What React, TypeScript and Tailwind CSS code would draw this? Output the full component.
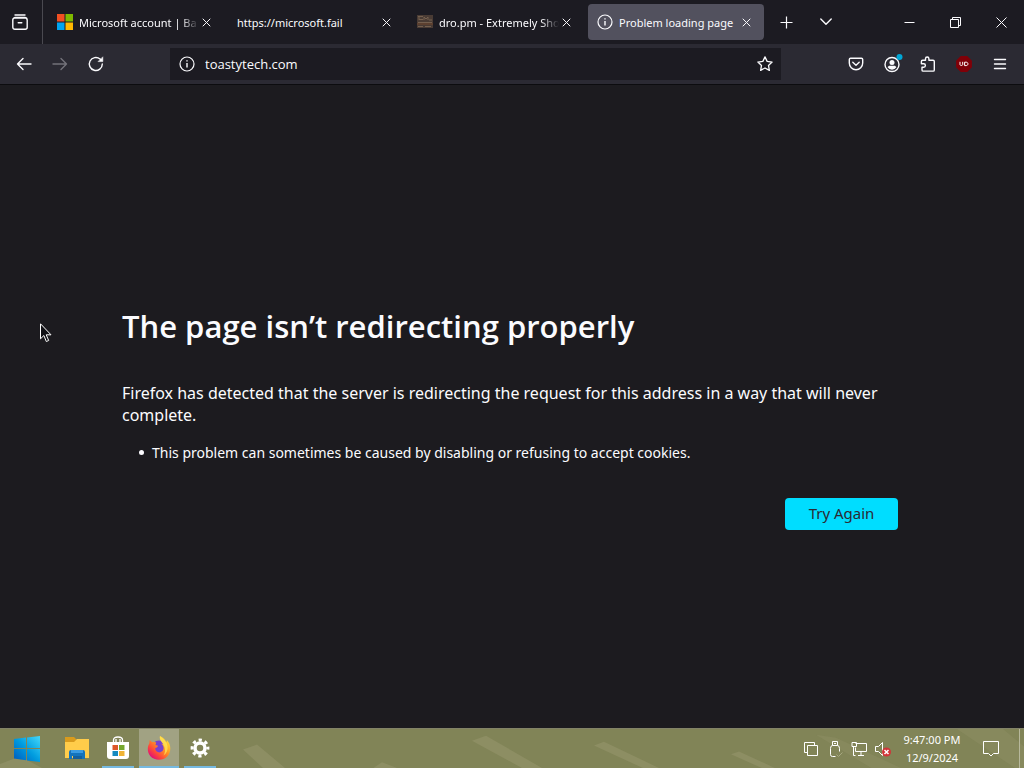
import type { ReactNode } from "react";

function Close({ className = "" }: { className?: string }) {
  return (
    <svg viewBox="0 0 10 10" className={className} fill="none" stroke="currentColor" aria-hidden="true">
      <path d="M.8.8l8.4 8.4M9.2.8L.8 9.2" strokeWidth="1.1" />
    </svg>
  );
}

function Info() {
  return (
    <svg viewBox="0 0 16 16" className="h-4 w-4 shrink-0" fill="none" stroke="currentColor" strokeWidth="1.2" aria-hidden="true">
      <circle cx="8" cy="8" r="7" />
      <path d="M8 7v4.5M8 4.2v1.3" strokeWidth="1.4" />
    </svg>
  );
}

function MicrosoftLogo() {
  return (
    <svg viewBox="0 0 16 16" className="h-4 w-4 shrink-0" aria-hidden="true">
      <path fill="#f25022" d="M0 0h7.5v7.5H0z" />
      <path fill="#7fba00" d="M8.5 0H16v7.5H8.5z" />
      <path fill="#00a4ef" d="M0 8.5h7.5V16H0z" />
      <path fill="#ffb900" d="M8.5 8.5H16V16H8.5z" />
    </svg>
  );
}

function DroIcon() {
  return (
    <svg viewBox="0 0 16 16" className="h-4 w-4 shrink-0" aria-hidden="true">
      <path fill="#493b34" d="M0 1h16v13H0z" />
      <path fill="none" stroke="#75604f" d="M1 2.5h5M2 2v4M2 5.5h4M7 6V3l2 2 2-2v3M12 6h3M1 8.5h14M1 12.500h5M8 12.500h6" />
      <path fill="#5c4030" d="M0 9h16v2H0z" />
    </svg>
  );
}

function Tab({ title, icon, active = false, fade = false }: { title: string; icon?: ReactNode; active?: boolean; fade?: boolean }) {
  return (
    <div className={`flex h-9 w-44 shrink-0 items-center rounded pr-[13px] pl-[9px] ${active ? "bg-[#52515e]" : ""}`}>
      {icon}
      <button
        type="button"
        className={`min-w-0 flex-1 overflow-hidden pt-px text-left text-[11px] leading-4 whitespace-nowrap ${icon ? "ml-[6px]" : ""} ${
          fade ? "[mask-image:linear-gradient(to_right,black_85%,transparent)]" : ""
        }`}
      >
        {title}
      </button>
      <button type="button" aria-label="Close tab" className="ml-[3px] shrink-0">
        <Close className="h-[9px] w-[9px]" />
      </button>
    </div>
  );
}

function ToolButton({ label, children, dim = false }: { label: string; children: ReactNode; dim?: boolean }) {
  return (
    <button type="button" aria-label={label} className={`flex h-8 w-9 shrink-0 items-center justify-center ${dim ? "text-[#73727a]" : ""}`}>
      <svg
        viewBox="0 0 16 16"
        className="h-4 w-4 overflow-visible"
        fill="none"
        stroke="currentColor"
        strokeWidth="1.4"
        strokeLinecap="round"
        strokeLinejoin="round"
        aria-hidden="true"
      >
        {children}
      </svg>
    </button>
  );
}

function WindowButton({ label, children }: { label: string; children: ReactNode }) {
  return (
    <button type="button" aria-label={label} className="flex h-full w-[46px] items-center justify-center">
      <svg viewBox="0 0 11 11" className="h-[11px] w-[11px]" fill="none" stroke="currentColor" aria-hidden="true">
        {children}
      </svg>
    </button>
  );
}

function TabStrip() {
  return (
    <header className="flex h-11 items-center bg-[#1c1b22]">
      <button type="button" aria-label="Recent browsing" className="flex h-full w-[42px] shrink-0 items-center justify-center pr-[2px]">
        <svg viewBox="0 0 16 16" className="h-4 w-4" fill="none" stroke="currentColor" strokeWidth="1.4" strokeLinecap="round" aria-hidden="true">
          <path d="M3 1h10M2.500 4h11a1.700 1.700 0 0 1 1.700 1.700v7.600a2 2 0 0 1-2 2H2.800a2 2 0 0 1-2-2V5.700A1.700 1.700 0 0 1 2.500 4zM1.200 5C1.400 3.800 2 3.600 3 3.500h10c1 .1 1.600.5 1.800 1.500M6.200 8.800h3.600" />
        </svg>
      </button>
      <div className="h-full border-l border-[#4a4950]" />
      <nav aria-label="Tabs" className="ml-[5px] flex gap-1">
        <Tab title="Microsoft account | Ba" icon={<MicrosoftLogo />} fade />
        <Tab title="https://microsoft.fail" />
        <Tab title="dro.pm - Extremely Sho" icon={<DroIcon />} fade />
        <Tab title="Problem loading page" icon={<Info />} active />
      </nav>
      <button type="button" aria-label="New tab" className="ml-1 flex h-9 w-9 items-center justify-center">
        <svg viewBox="0 0 13 13" className="h-[13px] w-[13px]" fill="none" stroke="currentColor" strokeWidth="1.2" aria-hidden="true">
          <path d="M6.500 .5v12M.5 6.500h12" />
        </svg>
      </button>
      <button type="button" aria-label="List all tabs" className="ml-1 flex h-9 w-9 items-center justify-center">
        <svg viewBox="0 0 12 12" className="h-3 w-3" fill="none" stroke="currentColor" strokeWidth="1.4" strokeLinecap="round" strokeLinejoin="round" aria-hidden="true">
          <path d="M.8 3L6 8.200 11.200 3" />
        </svg>
      </button>
      <div className="ml-auto flex h-full">
        <WindowButton label="Minimize">
          <path d="M.5 5.500h10" />
        </WindowButton>
        <WindowButton label="Restore">
          <path d="M.5 2.500h8v8h-8zM2.500 2.500v-2h8v8h-2" />
        </WindowButton>
        <WindowButton label="Close">
          <path d="M.5.5l10 10M10.500.5l-10 10" />
        </WindowButton>
      </div>
    </header>
  );
}

function Toolbar() {
  return (
    <div className="flex h-[41px] items-center border-b border-[#0c0c0f] bg-[#2b2a33] px-[6px]">
      <ToolButton label="Back">
        <path d="M15 8H1.500M7 2.500L1.500 8 7 13.500" />
      </ToolButton>
      <ToolButton label="Forward" dim>
        <path d="M1 8h13.500M9 2.500L14.500 8 9 13.500" />
      </ToolButton>
      <ToolButton label="Reload">
        <path d="M14.300 8a6.500 6.500 0 1 1-2.200-4.900l1 1" />
        <path d="M14.800 1.200v4.400h-4.400z" fill="currentColor" strokeWidth=".6" />
      </ToolButton>
      <div className="mr-[57px] ml-14 flex h-8 min-w-0 flex-1 items-center bg-[#1c1b22] pl-[9px]">
        <Info />
        <input
          aria-label="Address"
          defaultValue="toastytech.com"
          className="ml-[10px] min-w-0 flex-1 bg-transparent pt-[2px] font-['Open_Sans','Noto_Sans',sans-serif] text-[13px] text-[#fbfbfe] outline-none"
        />
        <button type="button" aria-label="Bookmark this page" className="flex h-8 w-8 items-center justify-center">
          <svg viewBox="0 0 16 16" className="h-4 w-4" fill="none" stroke="currentColor" strokeWidth="1.300" strokeLinejoin="round" aria-hidden="true">
            <path d="M8 .9l2.150 4.500 4.950.65-3.620 3.420.9 4.900L8 12l-4.380 2.370.9-4.900L.9 6.050l4.950-.65z" />
          </svg>
        </button>
      </div>
      <ToolButton label="Save to Pocket">
        <path d="M2.600 2.200h10.800c.7 0 1.300.5 1.300 1.300v3.600a6.700 6.700 0 0 1-13.400 0V3.500c0-.8.600-1.300 1.300-1.300zM4.800 6.300L8 9.300l3.200-3" />
      </ToolButton>
      <ToolButton label="Account">
        <circle cx="8" cy="8.500" r="7" />
        <circle cx="8" cy="6.600" r="2.500" fill="currentColor" stroke="none" />
        <path d="M3.600 11.300c.5-1 1.300-1.500 2.400-1.500h4c1.100 0 1.900.5 2.400 1.500A5.200 5.200 0 0 1 8 13.700a5.200 5.200 0 0 1-4.400-2.400z" fill="currentColor" stroke="none" />
        <circle cx="15.500" cy="1" r="3" fill="#00a7d6" stroke="none" />
      </ToolButton>
      <ToolButton label="Extensions">
        <path d="M5.500 4.200V2.700a1.700 1.700 0 0 1 3.400 0v1.500h4.200c.7 0 1.200.5 1.200 1.200v8.500c0 .7-.5 1.200-1.200 1.200H3.200c-.7 0-1.200-.5-1.200-1.200v-2.700h1.700a1.700 1.700 0 0 0 0-3.400H1.400V5.400c0-.7.5-1.200 1.200-1.200z" />
      </ToolButton>
      <ToolButton label="uBlock Origin">
        <path d="M5 .8h6L15.200 5v6L11 15.200H5L.8 11V5z" fill="#800008" stroke="#800008" />
        <path d="M4 6.200v2.500c0 1 2.700 1 2.700 0V6.200M9 6.200h1.200c2.300 0 2.300 3.400 0 3.400H9z" stroke="#fff" strokeWidth="1" />
      </ToolButton>
      <ToolButton label="Application menu">
        <path d="M2.500 3.500h11M2.500 8h11M2.500 12.500h11" strokeWidth="1.400" />
      </ToolButton>
    </div>
  );
}

function TaskButton({ label, children, active = false, running = false }: { label: string; children: ReactNode; active?: boolean; running?: boolean }) {
  return (
    <button type="button" aria-label={label} className={`flex h-full w-10 flex-col items-center ${active ? "bg-[#a1a283]" : ""}`}>
      <span className="flex flex-1 items-center pt-px">{children}</span>
      <span className={`h-[2px] ${active ? "w-full" : "w-8"} ${running ? "bg-[#76b9e0]" : ""}`} />
    </button>
  );
}

function TrayIcon({ label, children }: { label: string; children: ReactNode }) {
  return (
    <button type="button" aria-label={label} className="flex h-full w-6 items-center justify-center">
      <svg viewBox="0 0 16 16" className="h-4 w-4 overflow-visible" fill="none" stroke="currentColor" aria-hidden="true">
        {children}
      </svg>
    </button>
  );
}

function Taskbar() {
  return (
    <footer className="relative isolate flex h-10 items-center overflow-hidden border-t border-[#828368] bg-[#818457] text-white">
      <svg viewBox="0 0 1024 40" preserveAspectRatio="none" className="absolute inset-0 -z-10 h-full w-full" aria-hidden="true">
        <g fill="#8d8e63">
          <path d="M0 36l20-8 22 12H0zM243 21l14-5 28 24h-22zM372 41l10-7 20 8zM472 12l14-5 56 33h-20zM594 17l10-4 57 28h-16zM731 26l8-3 38 18h-13z" />
          <path d="M816 6l20 3 67 32h-30zM957 0h46l21 18v22h-9z" opacity=".5" />
        </g>
      </svg>
      <button type="button" aria-label="Start" className="flex h-full w-[54px] items-center justify-center">
        <svg viewBox="0 0 28 26" className="h-[26px] w-7" aria-hidden="true">
          <defs>
            <linearGradient id="start" x1="0" y1="1" x2="1" y2="0">
              <stop stopColor="#0057bc" />
              <stop offset=".5" stopColor="#009cdf" />
              <stop offset="1" stopColor="#45d8fa" />
            </linearGradient>
          </defs>
          <path fill="url(#start)" d="M1 3l12-1.500V12H1zM14 1.400L27 0v12H14zM1 13h12v11.200L1 22.500zM14 13h13v13l-13-1.600z" />
        </svg>
      </button>
      <div className="ml-[3px] flex h-full gap-px">
        <TaskButton label="File Explorer">
          <svg viewBox="0 0 26 24" className="h-6 w-[26px]" aria-hidden="true">
            <path fill="#d99b1d" d="M1 1h9l3 3h12v5H1z" />
            <path fill="#ffcc4a" d="M1 6h9l3-3h12v19H1z" />
            <path fill="#1473bc" d="M5 23v-7q0-2 2-2h12q2 0 2 2v7h-3v-3H8v3z" />
            <path fill="#3b9be2" d="M7 14h12v3H7z" />
            <path fill="#145f9e" d="M9 20h9v3H9z" />
          </svg>
        </TaskButton>
        <TaskButton label="Microsoft Store" running>
          <svg viewBox="0 0 24 24" className="h-6 w-6" aria-hidden="true">
            <path d="M7.500 7V4q0-3 4.500-3t4.500 3v3M10 6V3M14 3v3" fill="none" stroke="#fff" strokeWidth="1.300" />
            <path fill="#fff" d="M1 6h22v14q0 3-3 3H4q-3 0-3-3z" />
            <path fill="#dd5728" d="M6.500 9H12v5H6.500z" />
            <path fill="#75a72e" d="M13 9h5.500v5H13z" />
            <path fill="#178abf" d="M6.500 15H12v5H6.500z" />
            <path fill="#efb335" d="M13 15h5.500v5H13z" />
          </svg>
        </TaskButton>
        <TaskButton label="Firefox" active running>
          <svg viewBox="0 0 24 24" className="h-6 w-6" aria-hidden="true">
            <defs>
              <linearGradient id="fox" x1=".9" y1=".1" x2=".2" y2=".9">
                <stop stopColor="#ffe33d" />
                <stop offset=".4" stopColor="#ff9e22" />
                <stop offset=".75" stopColor="#ff4b37" />
                <stop offset="1" stopColor="#e31572" />
              </linearGradient>
            </defs>
            <circle cx="12" cy="12" r="7.500" fill="#7941cd" />
            <path fill="url(#fox)" d="M13 0c4 2 5.500 4 6 6 1-.3 1-1.200.8-2 5 5 4.200 12.500.4 16.500C16 25 7.500 25 3.200 20 0 16 .3 10.500 2.300 7.500L2.700 4l2.500 2.300c1.300-.5 2.700-.5 4 .2L8.500 9l2.500.8c-.2 1.200-1.200 1.700-2.800 2.500 0 4 4.500 5.200 7 3 2.500-2.500 1.300-6.300-1-7.500 1 0 1.700.3 2.400.8C15.500 5.500 12 4 13 0z" />
            <path fill="#ffe55a" opacity=".75" d="M13 0c4 3 7 6 7.500 10 .6 4-.8 7.500-4 9.500 3-5 1-8.500-.2-11C15 6 12 4 13 0z" />
          </svg>
        </TaskButton>
        <TaskButton label="Settings" running>
          <svg viewBox="0 0 20 20" className="h-5 w-5" aria-hidden="true">
            <g fill="none" stroke="#fff">
              <circle cx="10" cy="10" r="5" strokeWidth="3.500" />
              <circle cx="10" cy="10" r="7.900" strokeWidth="3" strokeDasharray="3.200 3.004" strokeDashoffset="1.600" />
            </g>
          </svg>
        </TaskButton>
      </div>
      <div className="ml-auto flex h-full items-center">
        <TrayIcon label="Virtual machine">
          <path d="M4.500 4.500h10v10h-10zM4.500 11.500h-3v-10h10v3" />
        </TrayIcon>
        <TrayIcon label="Safely remove hardware">
          <path d="M5.500 4.500v-4h5v4M7 2.500h2M3.500 13.500v-6q0-3 2-3h5q2 0 2 3v3M3.500 13.500q0 2 2 2h3" />
          <path d="M9.500 13.500l2 2 4-4" stroke="#a6a77f" />
        </TrayIcon>
        <TrayIcon label="Network">
          <path d="M4.500 2.500h11v8H4.500v-4M1 1.500h4.500v4H1zM2.500 5.500v9h2M10 10.500v4M7 14.500h6" />
        </TrayIcon>
        <TrayIcon label="Volume muted">
          <path d="M.5 5.500h3l4-4v13l-4-4h-3z" />
          <circle cx="11.500" cy="11" r="4.500" fill="#d13438" stroke="none" />
          <path d="M9.500 9l4 4M13.500 9l-4 4" strokeWidth="1.500" />
        </TrayIcon>
        <button type="button" className="w-[74px] text-center text-[11px] leading-[18px]">
          <span className="block">9:47:00 PM</span>
          <span className="block">12/9/2024</span>
        </button>
        <button type="button" aria-label="Notifications" className="flex h-full w-11 items-center justify-center">
          <svg viewBox="0 0 16 16" className="h-4 w-4 overflow-visible" fill="none" stroke="currentColor" aria-hidden="true">
            <path d="M.5.5h15v12h-5L8 15l-2.500-2.500h-5z" />
          </svg>
        </button>
        <button type="button" aria-label="Show desktop" className="ml-[6px] h-full w-[5px] border-l border-[#b7b89c]" />
      </div>
    </footer>
  );
}

export default function App() {
  return (
    <div className="relative flex min-h-screen flex-col bg-[#1c1b1f] font-['Noto_Sans','Open_Sans',sans-serif] text-[#fbfbfe]">
      <TabStrip />
      <Toolbar />
      <main className="flex flex-1 flex-col justify-center px-6 pb-6">
        <div className="mx-auto flex w-full max-w-[780px] flex-col pt-[46px] pr-1">
          <h1 className="font-['Open_Sans','Noto_Sans',sans-serif] text-[31px] leading-10 font-semibold">The page isn’t redirecting properly</h1>
          <p className="mt-9 text-base leading-[22px]">
            Firefox has detected that the server is redirecting the request for this address in a way that will never complete.
          </p>
          <ul className="mt-4 pl-[17px] text-sm leading-[22px]">
            <li className="flex items-center gap-2 before:h-[5px] before:w-[5px] before:shrink-0 before:rounded-full before:bg-current">
              This problem can sometimes be caused by disabling or refusing to accept cookies.
            </li>
          </ul>
          <button type="button" className="mt-[34px] h-8 w-[113px] self-end rounded bg-[#00ddff] text-[15px] text-[#2b2a33]">
            Try Again
          </button>
        </div>
      </main>
      <Taskbar />
      <svg viewBox="0 0 12 20" className="pointer-events-none absolute top-[323px] left-[40px] h-5 w-3" aria-hidden="true">
        <path d="M.5.8v15l3.400-3.300 2.400 6 2.400-1-2.500-5.700H11z" fill="#101014" stroke="#fff" />
      </svg>
    </div>
  );
}
